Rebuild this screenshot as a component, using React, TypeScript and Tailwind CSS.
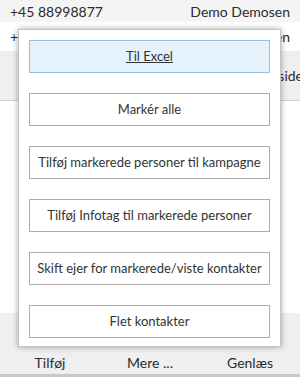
import React from "react";

const actions = [
  "Til Excel",
  "Markér alle",
  "Tilføj markerede personer til kampagne",
  "Tilføj Infotag til markerede personer",
  "Skift ejer for markerede/viste kontakter",
  "Flet kontakter",
];

function ToolIcon() {
  return (
    <svg width="24" height="24" viewBox="0 0 24 24">
      <circle cx="12" cy="12" r="10" fill="none" stroke="#1e73be" strokeWidth="2" />
    </svg>
  );
}

export default function App() {
  return (
    <div
      className="relative h-[380px] w-[300px] overflow-hidden bg-white text-[14px] text-[#2b2b2b]"
      style={{ fontFamily: '"Segoe UI", Lato, sans-serif' }}
    >
      <div className="flex h-[22px] items-center justify-between bg-[#f4f4f4] px-[10px]">
        <span>+45 88998877</span>
        <span>Demo Demosen</span>
      </div>
      <div className="flex h-[29px] items-center justify-between px-[10px]">
        <span>+45 12345678</span>
        <span>Demo Jensen</span>
      </div>
      <div className="flex h-[50px] items-center justify-end border-b border-[#d0d0d0] bg-[#efefef] pr-0">
        <span className="-mr-[3px] whitespace-nowrap">Forside</span>
      </div>
      <div className="h-[212px]" />
      <div className="flex h-[64px] border-b-[3px] border-[#c8c8c8] bg-[#efefef]">
        {["Tilføj", "Mere ...", "Genlæs"].map((t) => (
          <div key={t} className="flex flex-1 flex-col items-center pt-[11px]">
            <ToolIcon />
            <span className="mt-[5px] leading-[20px]">{t}</span>
          </div>
        ))}
      </div>

      <div className="absolute left-[18px] top-[29px] flex w-[263px] flex-col gap-[20px] border border-[#c4c4c4] bg-white px-[10px] pb-[8px] pt-[10px] text-[13px] text-[#333] shadow-[0_0_6px_rgba(0,0,0,0.35)]">
        {actions.map((a, i) => (
          <div
            key={a}
            className={
              i === 0
                ? "flex h-[33px] items-center justify-center whitespace-nowrap border border-[#8fc3e6] bg-[#e5f1fb] underline"
                : "flex h-[33px] items-center justify-center whitespace-nowrap border border-[#adadad] bg-white"
            }
          >
            {a}
          </div>
        ))}
      </div>
    </div>
  );
}
